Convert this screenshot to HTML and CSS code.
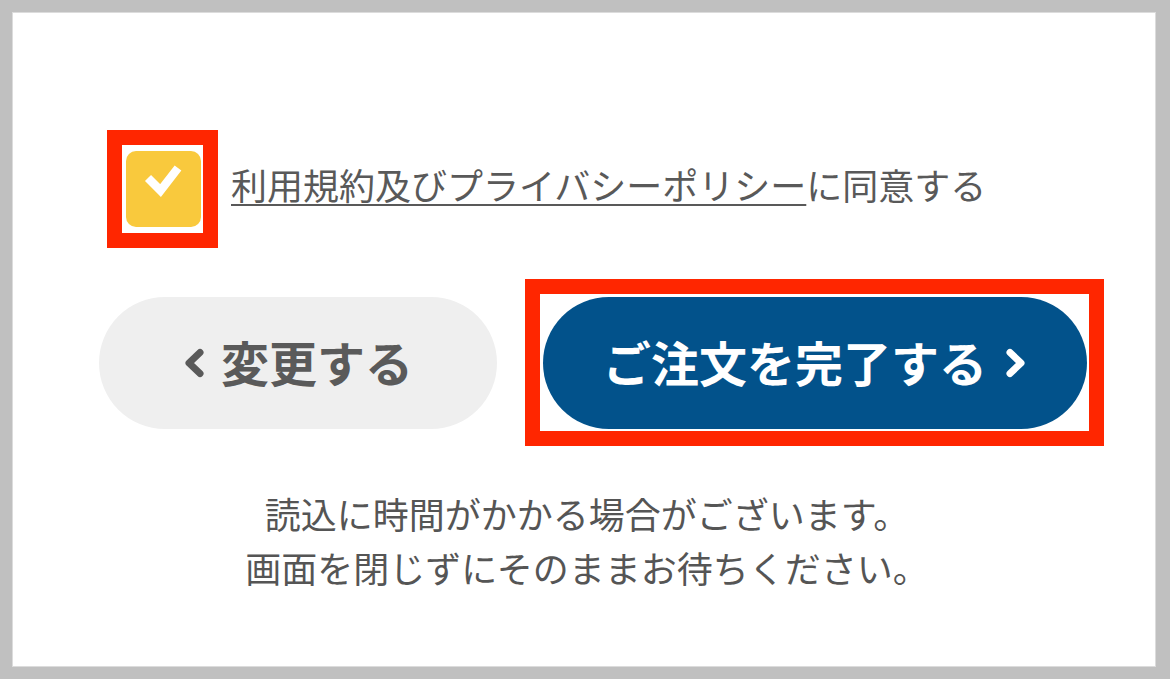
FILE: index.html
```html
<!DOCTYPE html>
<html lang="ja">
<head>
<meta charset="utf-8">
<title>ご注文確認</title>
<link rel="stylesheet" href="styles.css">
</head>
<body>
<main class="frame">
  <label class="agree">
    <span class="mark mark-check">
      <span class="checkbox">
        <svg class="check-icon" viewBox="0 0 75 76" width="75" height="76" aria-hidden="true">
          <polyline points="22,27 34.5,39.5 52,17" fill="none" stroke="#fff" stroke-width="8.5" stroke-linecap="butt" stroke-linejoin="miter"/>
        </svg>
      </span>
    </span>
    <span class="agree-text"><a class="terms-link" href="#">利用規約及びプライバシーポリシー</a>に同意する</span>
  </label>

  <div class="actions">
    <button class="btn btn-back" type="button">
      <svg class="chev" viewBox="0 0 22 30" width="22" height="30" aria-hidden="true">
        <polyline points="17,4.5 6,15 17,25.5" fill="none" stroke="currentColor" stroke-width="7" stroke-linecap="round" stroke-linejoin="round"/>
      </svg>
      <span>変更する</span>
    </button>
    <span class="mark mark-submit">
      <button class="btn btn-submit" type="button">
        <span>ご注文を完了する</span>
        <svg class="chev" viewBox="0 0 22 30" width="22" height="30" aria-hidden="true">
          <polyline points="5,4.5 16,15 5,25.5" fill="none" stroke="currentColor" stroke-width="7" stroke-linecap="round" stroke-linejoin="round"/>
        </svg>
      </button>
    </span>
  </div>

  <p class="notice">読込に時間がかかる場合がございます。<br>画面を閉じずにそのままお待ちください。</p>
</main>
</body>
</html>
```

FILE: styles.css
```css
html, body {
  margin: 0;
  padding: 0;
}

body {
  background: #c0c0c0;
  height: 679px;
  overflow: hidden;
  font-family: "Noto Sans CJK JP", "Noto Sans", sans-serif;
  color: #555;
}

.frame {
  box-sizing: border-box;
  margin: 12px 14px 12px 12px;
  height: 655px;
  background: #fff;
  border: 1px solid #dcdcdc;
  padding-top: 117px;
  display: flex;
  flex-direction: column;
}

.mark {
  box-sizing: border-box;
  border: 15px solid #ff2600;
  display: inline-flex;
}

.agree {
  display: flex;
  align-items: center;
  gap: 13px;
  margin-left: 94px;
  cursor: pointer;
}

.mark-check {
  padding: 6px 2px 6px 4px;
}

.checkbox {
  width: 75px;
  height: 76px;
  background: #f9c93d;
  border-radius: 10px;
  display: block;
}

.check-icon {
  display: block;
}

.agree-text {
  font-size: 36px;
  line-height: 1;
  color: #595959;
  white-space: nowrap;
  margin-top: -10px;
}

.terms-link {
  color: inherit;
  text-decoration: underline;
  text-decoration-thickness: 2px;
  text-underline-offset: 4px;
}

.actions {
  display: flex;
  align-items: center;
  margin-top: 31px;
  margin-left: 86px;
  gap: 28px;
}

.btn {
  border: 0;
  margin: 0;
  height: 132px;
  border-radius: 66px;
  display: flex;
  align-items: center;
  justify-content: center;
  font-family: "Noto Sans CJK JP", "Noto Sans", sans-serif;
  font-weight: 700;
  font-size: 48px;
  line-height: 1;
  cursor: pointer;
}

.btn span {
  display: block;
  margin-top: -4px;
}

.chev {
  display: block;
  flex: none;
}

.btn-back {
  width: 398px;
  background: #efefef;
  color: #5a5a5a;
  gap: 16px;
}

.mark-submit {
  padding: 3px 2px 2px 3px;
}

.btn-submit {
  width: 544px;
  background: #02528b;
  color: #fff;
  gap: 18px;
}

.notice {
  margin: 40px 0 0 6px;
  text-align: center;
  font-size: 36px;
  line-height: 54px;
  color: #555;
}
```
